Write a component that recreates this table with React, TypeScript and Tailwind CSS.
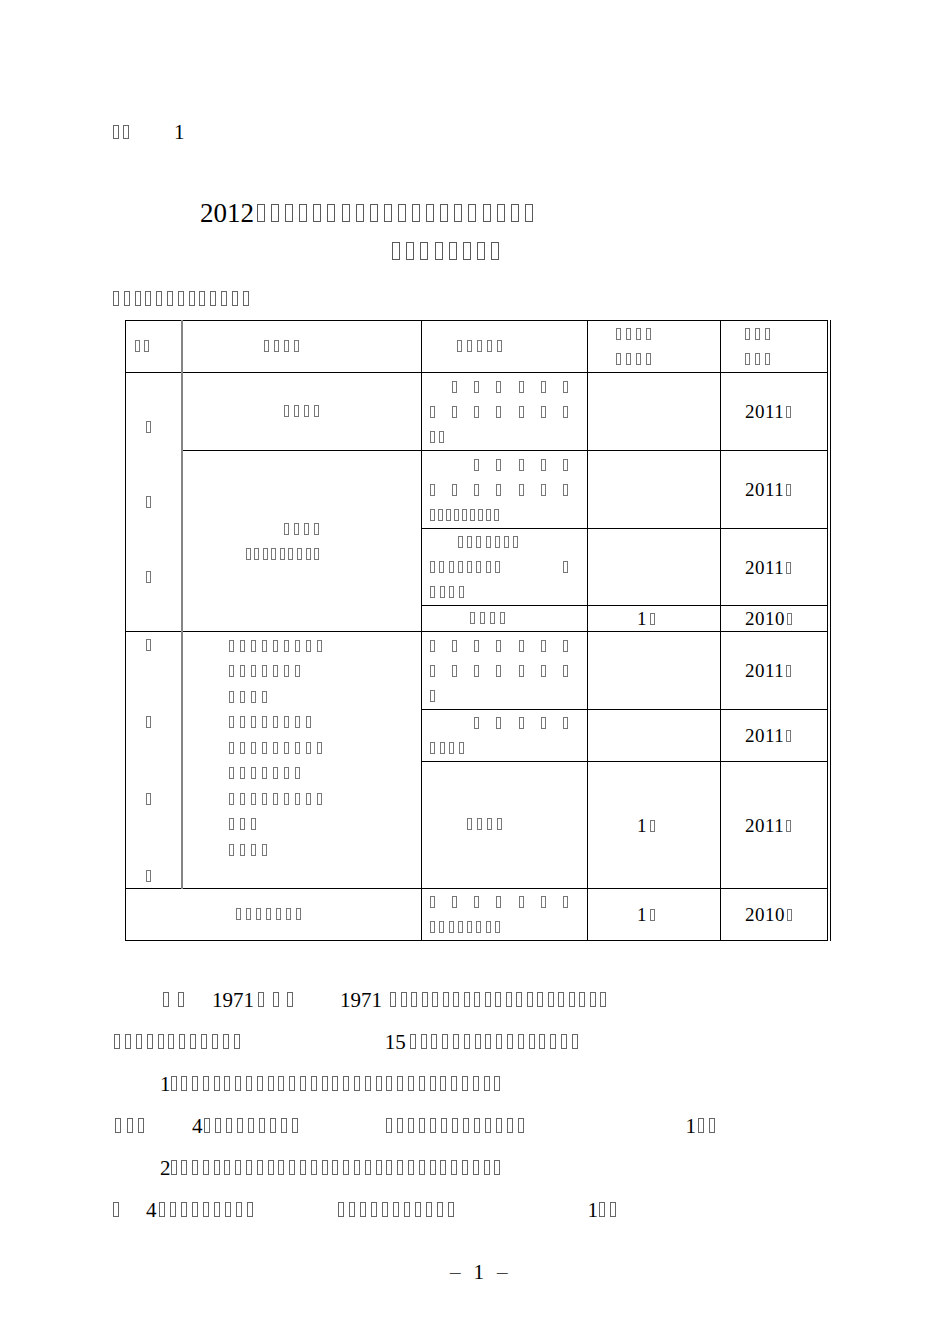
import React from 'react';

// missing-glyph boxes, the way the source PDF rendered its CJK text
const B_TITLE = 'w-[8px] h-[18px] border border-[#5a5a5a]';
const B_BODY = 'w-[6px] h-[15px] border border-[#666]';
const B_CELL = 'w-[5px] h-[12px] border border-[#777]';

function Tofu({ n, box = B_CELL, gap = 'gap-[5px]', className = '' }: { n: number; box?: string; gap?: string; className?: string }) {
  return (
    <span className={`inline-flex items-end ${gap} ${className}`}>
      {Array.from({ length: n }, (_, i) => (
        <span key={i} className={`inline-block shrink-0 ${box}`} />
      ))}
    </span>
  );
}

// justified cell line: 7 slots, the last n filled
function Spread({ n }: { n: number }) {
  return (
    <div className="flex h-[25px] items-center">
      <div className="flex w-[138px] justify-between">
        {Array.from({ length: 7 }, (_, i) => (
          <span key={i} className={`inline-block shrink-0 ${B_CELL} ${i < 7 - n ? 'invisible' : ''}`} />
        ))}
      </div>
    </div>
  );
}

function Line({ children, className = '' }: { children: React.ReactNode; className?: string }) {
  return <div className={`flex h-[25px] items-center ${className}`}>{children}</div>;
}

function Year({ y }: { y: string }) {
  return (
    <div className="flex items-baseline pl-[24px] text-[19px] leading-none tracking-[0.5px]">
      <span>{y}</span>
      <Tofu n={1} className="ml-[2px]" />
    </div>
  );
}

function One() {
  return (
    <div className="flex items-baseline pl-[49px] text-[19px] leading-none">
      <span>1</span>
      <Tofu n={1} className="ml-[3px]" />
    </div>
  );
}

const td = 'border border-black p-0 align-middle';
const tdL = 'border border-black border-r-2 border-r-[#858585] p-0 align-middle';

export default function App() {
  const col2Lines = [9, 7, 4, 8, 9, 7, 9, 3, 4];

  return (
    <div className="w-[950px] h-[1344px] bg-white text-black [font-family:'Liberation_Serif','Noto_Sans_CJK_SC',serif]">
      <div className="flex flex-col">
        {/* attachment label */}
        <div className="mt-[116px] flex h-[30px] items-baseline pl-[113px] pt-[6px] text-[21px] leading-none">
          <Tofu n={2} box="w-[6px] h-[14px] border border-[#666]" gap="gap-[4px]" />
          <span className="ml-[45px]">1</span>
        </div>

        {/* title */}
        <div className="mt-[50px] flex h-[30px] items-baseline pl-[200px] pt-[4px] text-[27px] leading-none">
          <span>2012</span>
          <Tofu n={20} box={B_TITLE} gap="gap-[6.1px]" className="ml-[3px]" />
        </div>
        <div className="mt-[10px] flex h-[30px] items-center pl-[392px]">
          <Tofu n={8} box={B_TITLE} gap="gap-[6.2px]" />
        </div>
        <div className="mt-[17px] flex h-[30px] items-center pl-[113px]">
          <Tofu n={13} box={B_BODY} gap="gap-[4.8px]" />
        </div>

        {/* table */}
        <div className="mt-[7px] ml-[125px] flex w-fit border-r border-black pr-[2px]">
          <table className="table-fixed border-collapse w-[702px]">
            <colgroup>
              <col className="w-[56px]" />
              <col className="w-[240px]" />
              <col className="w-[166px]" />
              <col className="w-[133px]" />
              <col className="w-[107px]" />
            </colgroup>
            <tbody>
              <tr className="h-[52px]">
                <td className={tdL}>
                  <div className="pl-[9px]"><Tofu n={2} gap="gap-[4px]" /></div>
                </td>
                <td className={td}>
                  <div className="pl-[81px]"><Tofu n={4} gap="gap-[5px]" /></div>
                </td>
                <td className={td}>
                  <div className="pl-[35px]"><Tofu n={5} gap="gap-[5px]" /></div>
                </td>
                <td className={td}>
                  <div className="pl-[28px]">
                    <Line><Tofu n={4} gap="gap-[5px]" /></Line>
                    <Line><Tofu n={4} gap="gap-[5px]" /></Line>
                  </div>
                </td>
                <td className={td}>
                  <div className="pl-[24px]">
                    <Line><Tofu n={3} gap="gap-[5px]" /></Line>
                    <Line><Tofu n={3} gap="gap-[5px]" /></Line>
                  </div>
                </td>
              </tr>

              <tr className="h-[78px]">
                <td rowSpan={4} className={tdL}>
                  <div className="flex flex-col gap-[63px] pl-[20px]">
                    <Tofu n={1} />
                    <Tofu n={1} />
                    <Tofu n={1} />
                  </div>
                </td>
                <td className={td}>
                  <div className="pl-[101px]"><Tofu n={4} gap="gap-[5px]" /></div>
                </td>
                <td className={td}>
                  <div className="pl-[8px]">
                    <Spread n={6} />
                    <Spread n={7} />
                    <Line><Tofu n={2} gap="gap-[4px]" /></Line>
                  </div>
                </td>
                <td className={td} />
                <td className={td}><Year y="2011" /></td>
              </tr>

              <tr className="h-[78px]">
                <td rowSpan={3} className={td}>
                  <div className="pl-[63px]">
                    <Line className="pl-[38px]"><Tofu n={4} gap="gap-[5px]" /></Line>
                    <Line><Tofu n={9} gap="gap-[3.6px]" /></Line>
                  </div>
                </td>
                <td className={td}>
                  <div className="pl-[8px]">
                    <Spread n={5} />
                    <Spread n={7} />
                    <Line><Tofu n={9} gap="gap-[3px]" /></Line>
                  </div>
                </td>
                <td className={td} />
                <td className={td}><Year y="2011" /></td>
              </tr>

              <tr className="h-[77px]">
                <td className={td}>
                  <div className="pl-[8px]">
                    <Line className="pl-[28px]"><Tofu n={7} gap="gap-[4.2px]" /></Line>
                    <Line>
                      <div className="flex w-[138px] justify-between">
                        <Tofu n={8} gap="gap-[4.3px]" />
                        <Tofu n={1} />
                      </div>
                    </Line>
                    <Line><Tofu n={4} gap="gap-[4.5px]" /></Line>
                  </div>
                </td>
                <td className={td} />
                <td className={td}><Year y="2011" /></td>
              </tr>

              <tr className="h-[26px]">
                <td className={td}>
                  <div className="pl-[48px]"><Tofu n={4} gap="gap-[5px]" /></div>
                </td>
                <td className={td}><One /></td>
                <td className={td}><Year y="2010" /></td>
              </tr>

              <tr className="h-[78px]">
                <td rowSpan={3} className={tdL}>
                  <div className="flex flex-col gap-[65px] pl-[20px]">
                    <Tofu n={1} />
                    <Tofu n={1} />
                    <Tofu n={1} />
                    <Tofu n={1} />
                  </div>
                </td>
                <td rowSpan={3} className={`${td} align-top`}>
                  <div className="pl-[46px] pt-[1px]">
                    {col2Lines.map((n, i) => (
                      <div key={i} className="flex h-[25.5px] items-center">
                        <Tofu n={n} gap="gap-[6px]" />
                      </div>
                    ))}
                  </div>
                </td>
                <td className={td}>
                  <div className="pl-[8px]">
                    <Spread n={7} />
                    <Spread n={7} />
                    <Line><Tofu n={1} /></Line>
                  </div>
                </td>
                <td className={td} />
                <td className={td}><Year y="2011" /></td>
              </tr>

              <tr className="h-[52px]">
                <td className={td}>
                  <div className="pl-[8px]">
                    <Spread n={5} />
                    <Line><Tofu n={4} gap="gap-[4.5px]" /></Line>
                  </div>
                </td>
                <td className={td} />
                <td className={td}><Year y="2011" /></td>
              </tr>

              <tr className="h-[127px]">
                <td className={td}>
                  <div className="pl-[45px]"><Tofu n={4} gap="gap-[5px]" /></div>
                </td>
                <td className={td}><One /></td>
                <td className={td}><Year y="2011" /></td>
              </tr>

              <tr className="h-[52px]">
                <td colSpan={2} className={td}>
                  <div className="pl-[110px]"><Tofu n={7} gap="gap-[5px]" /></div>
                </td>
                <td className={td}>
                  <div className="pl-[8px]">
                    <Spread n={7} />
                    <Line><Tofu n={8} gap="gap-[4.3px]" /></Line>
                  </div>
                </td>
                <td className={td}><One /></td>
                <td className={td}><Year y="2010" /></td>
              </tr>
            </tbody>
          </table>
        </div>

        {/* body text */}
        <div className="mt-[38px] flex flex-col text-[21px] leading-none">
          <div className="flex h-[42px] items-center">
            <div className="flex items-baseline pl-[163px]">
              <Tofu n={2} box={B_BODY} gap="gap-[9px]" />
              <span className="ml-[28px]">1971</span>
              <Tofu n={3} box={B_BODY} gap="gap-[8.5px]" className="ml-[4px]" />
              <span className="ml-[47px]">1971</span>
              <Tofu n={21} box={B_BODY} gap="gap-[4.5px]" className="ml-[8px]" />
            </div>
          </div>
          <div className="flex h-[42px] items-center">
            <div className="flex items-baseline pl-[114px]">
              <Tofu n={12} box={B_BODY} gap="gap-[4.9px]" />
              <span className="ml-[145px]">15</span>
              <Tofu n={16} box={B_BODY} gap="gap-[4.8px]" className="ml-[4px]" />
            </div>
          </div>
          <div className="flex h-[42px] items-center">
            <div className="flex items-baseline pl-[160px]">
              <span>1</span>
              <Tofu n={31} box={B_BODY} gap="gap-[4.8px]" />
            </div>
          </div>
          <div className="flex h-[42px] items-center">
            <div className="flex items-baseline pl-[115px]">
              <Tofu n={3} box={B_BODY} gap="gap-[5.5px]" />
              <span className="ml-[48px]">4</span>
              <Tofu n={9} box={B_BODY} gap="gap-[5px]" className="ml-[1px]" />
              <Tofu n={13} box={B_BODY} gap="gap-[5px]" className="ml-[88px]" />
              <span className="ml-[162px]">1</span>
              <Tofu n={2} box={B_BODY} gap="gap-[5px]" className="ml-[2px]" />
            </div>
          </div>
          <div className="flex h-[42px] items-center">
            <div className="flex items-baseline pl-[160px]">
              <span>2</span>
              <Tofu n={31} box={B_BODY} gap="gap-[4.8px]" />
            </div>
          </div>
          <div className="flex h-[42px] items-center">
            <div className="flex items-baseline pl-[113px]">
              <Tofu n={1} box={B_BODY} />
              <span className="ml-[27px]">4</span>
              <Tofu n={9} box={B_BODY} gap="gap-[5px]" className="ml-[2px]" />
              <Tofu n={11} box={B_BODY} gap="gap-[5px]" className="ml-[85px]" />
              <span className="ml-[134px]">1</span>
              <Tofu n={2} box={B_BODY} gap="gap-[5px]" className="ml-[1px]" />
            </div>
          </div>
        </div>

        {/* page number */}
        <div className="mt-[26px] flex h-[30px] items-center pl-[450px] text-[21px] leading-none">
          <span className="text-[#444]">–</span>
          <span className="ml-[13px]">1</span>
          <span className="ml-[13px] text-[#444]">–</span>
        </div>
      </div>
    </div>
  );
}
